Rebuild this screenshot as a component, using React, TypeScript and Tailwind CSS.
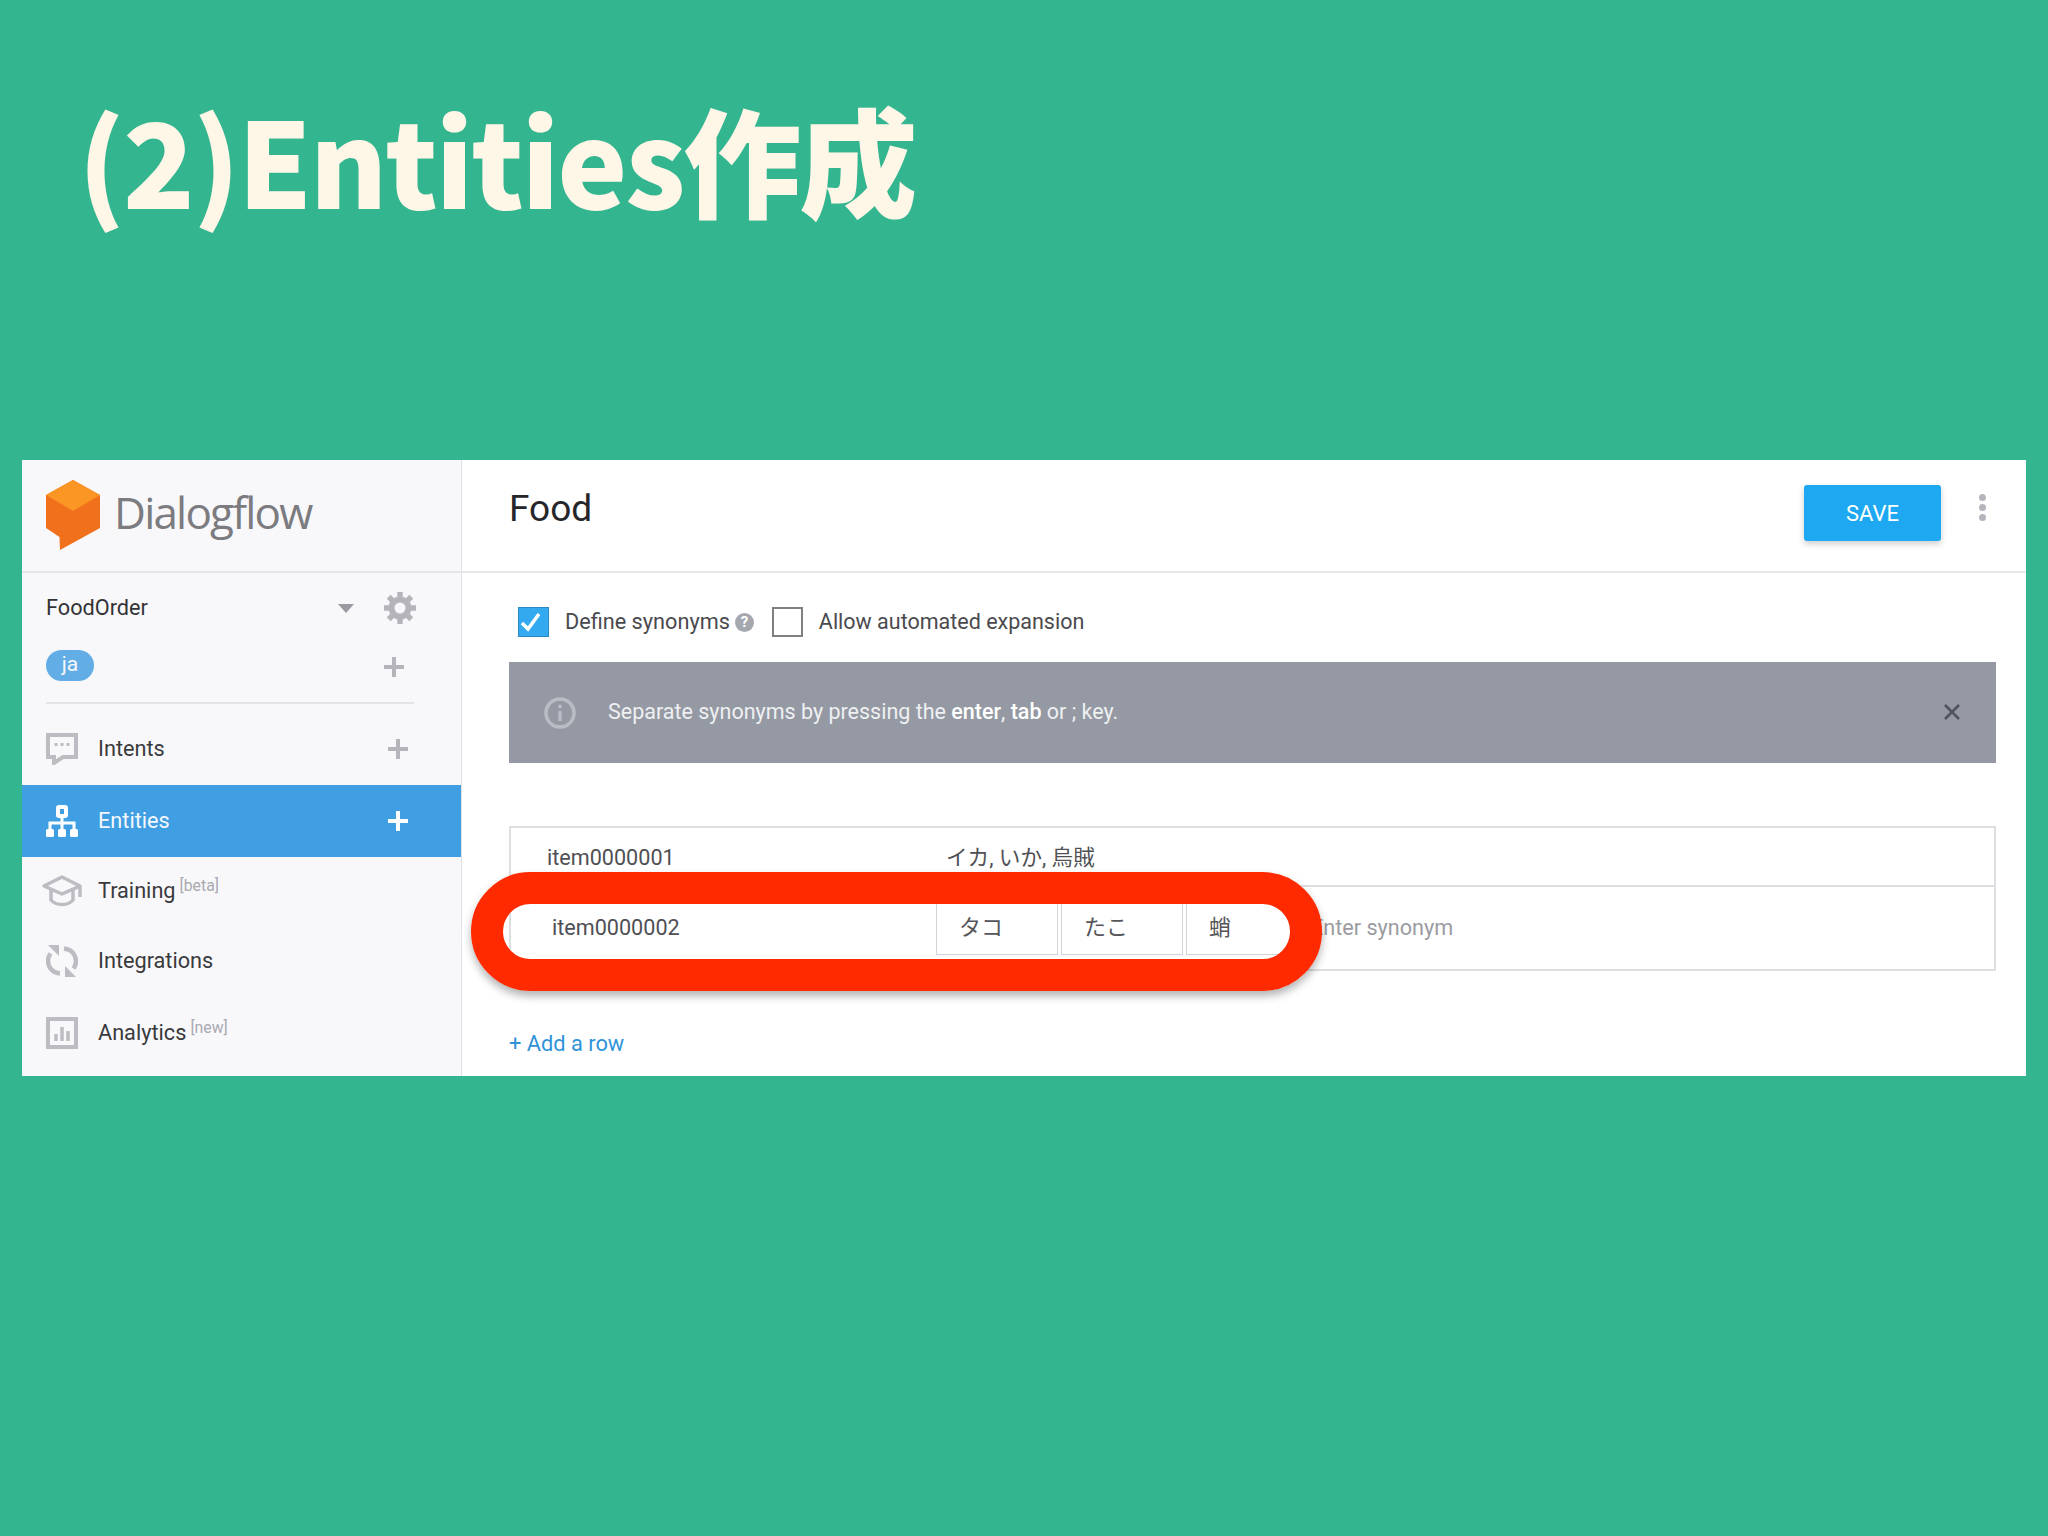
const roboto = { fontFamily: '"Roboto", "Noto Sans CJK JP", sans-serif' };

function Logo() {
  return (
    <svg width="54" height="70" viewBox="0 0 54 70" className="shrink-0">
      <path d="M27 0 L54 15 L54 48 L14 70 L13.5 57 L0 48 L0 15 Z" fill="#f0701c" />
      <path d="M27 0 L54 15 L27 31 L0 15 Z" fill="#fb9524" />
    </svg>
  );
}

function Plus({ color = "#b4b4ba", size = 22, stroke = 4 }: { color?: string; size?: number; stroke?: number }) {
  return (
    <svg width={size} height={size} viewBox="0 0 22 22" className="shrink-0">
      <path d="M11 1 V21 M1 11 H21" stroke={color} strokeWidth={stroke} fill="none" />
    </svg>
  );
}

function Gear() {
  return (
    <svg width="32" height="32" viewBox="0 0 32 32" className="shrink-0">
      <circle cx="16" cy="16" r="8.500" fill="none" stroke="#b4b4ba" strokeWidth="6" />
      <path
        d="M16 0 V6 M16 26 V32 M0 16 H6 M26 16 H32 M4.700 4.700 L9 9 M23 23 L27.300 27.300 M27.300 4.700 L23 9 M9 23 L4.700 27.300"
        stroke="#b4b4ba"
        strokeWidth="5.500"
      />
    </svg>
  );
}

function ChatIcon() {
  return (
    <svg width="32" height="32" viewBox="0 0 32 32" className="shrink-0">
      <path d="M2 2 H30 V24 H17 L8 30 V24 H2 Z" fill="none" stroke="#bcbcc2" strokeWidth="4" />
      <path d="M8.500 11.500 H11.500 M14.500 11.500 H17.500 M20.500 11.500 H23.500" stroke="#bcbcc2" strokeWidth="3" />
    </svg>
  );
}

function SitemapIcon() {
  return (
    <svg width="32" height="32" viewBox="0 0 32 32" className="shrink-0">
      <rect x="12" y="2" width="8" height="9" rx="1" fill="none" stroke="#fff" strokeWidth="4" />
      <path d="M16 12 V24 M4 24 V18 H28 V24" fill="none" stroke="#fff" strokeWidth="3" />
      <rect x="0" y="24" width="8" height="8" rx="1.500" fill="#fff" />
      <rect x="12" y="24" width="8" height="8" rx="1.500" fill="#fff" />
      <rect x="24" y="24" width="8" height="8" rx="1.500" fill="#fff" />
    </svg>
  );
}

function CapIcon() {
  return (
    <svg width="42" height="32" viewBox="0 0 42 32" className="shrink-0">
      <path d="M21 2 L39 11 L21 19 L3 11 Z" fill="none" stroke="#bcbcc2" strokeWidth="3.500" strokeLinejoin="round" />
      <path d="M10 15 V25 C15 31 27 31 32 25 V15" fill="none" stroke="#bcbcc2" strokeWidth="3.500" />
      <path d="M39 11 V22" fill="none" stroke="#bcbcc2" strokeWidth="3.500" />
    </svg>
  );
}

function SyncIcon() {
  return (
    <svg width="32" height="32" viewBox="0 0 32 32" className="shrink-0">
      <path d="M18 3.500 C25 4 30 9.500 30 16 C30 19 29 21.500 27.500 23.500" fill="none" stroke="#bcbcc2" strokeWidth="4.500" />
      <path d="M14 28.500 C7 28 2 22.500 2 16 C2 13 3 10.500 4.500 8.500" fill="none" stroke="#bcbcc2" strokeWidth="4.500" />
      <path d="M2 0 L13 0 L13 11 Z" fill="#bcbcc2" />
      <path d="M30 32 L19 32 L19 21 Z" fill="#bcbcc2" />
    </svg>
  );
}

function ChartIcon() {
  return (
    <svg width="32" height="32" viewBox="0 0 32 32" className="shrink-0">
      <rect x="2" y="2" width="28" height="28" fill="none" stroke="#bcbcc2" strokeWidth="4" />
      <path d="M10 24 V17 M16 24 V10 M22 24 V14" stroke="#bcbcc2" strokeWidth="3.500" />
    </svg>
  );
}

function InfoIcon() {
  return (
    <svg width="32" height="32" viewBox="0 0 32 32" className="shrink-0">
      <circle cx="16" cy="16" r="14" fill="none" stroke="#b9bcc4" strokeWidth="3.500" />
      <circle cx="16" cy="9.500" r="2" fill="#b9bcc4" />
      <path d="M16 14 V24" stroke="#b9bcc4" strokeWidth="3.500" />
    </svg>
  );
}

function NavRow({
  icon,
  label,
  tag,
  plus,
  active,
  h,
}: {
  icon: React.ReactNode;
  label: string;
  tag?: string;
  plus?: boolean;
  active?: boolean;
  h: string;
}) {
  return (
    <div className={`flex items-center pl-6 pr-[52px] ${h} ${active ? "bg-[#409ee2] text-[#f4f8fc]" : "text-[#3a3a3d]"}`}>
      <div className="w-[32px] flex justify-center">{icon}</div>
      <span className="ml-5 text-[21.700px] leading-none">{label}</span>
      {tag && <span className="ml-1 -mt-[10px] text-[15.800px] leading-none text-[#a9a9b1]">{tag}</span>}
      {plus && (
        <div className="ml-auto">
          <Plus color={active ? "#ffffff" : "#b4b4ba"} />
        </div>
      )}
    </div>
  );
}

function Chip({ text, w }: { text: string; w: string }) {
  return (
    <div className={`h-[55px] ${w} border border-[#d4d4d8] flex items-center pl-[22px] text-[22px] text-[#55555a]`}>{text}</div>
  );
}

export default function App() {
  return (
    <div className="relative w-[2048px] h-[1536px] bg-[#33b590] overflow-hidden" style={roboto}>
      <div className="h-[460px] pl-[78px] pt-[93px]">
        <h1
          className="text-[118px] leading-[130px] font-black text-[#fef6e6] tracking-[-2.200px]"
          style={{ fontFamily: '"Noto Sans CJK JP", sans-serif' }}
        >
          (2)Entities作成
        </h1>
      </div>

      <div className="relative mx-[22px] h-[616px] flex bg-white">
        {/* sidebar */}
        <aside className="w-[440px] shrink-0 bg-[#f8f8fa] border-r border-[#e2e2e6] flex flex-col">
          <div className="h-[113px] shrink-0 border-b-2 border-[#e6e6ea] flex items-center pl-6 pb-[1px]">
            <Logo />
            <span
              className="ml-[14px] -mt-[6px] text-[44px] leading-none font-medium text-[#7b7b80] tracking-[-1.800px]"
              style={{ fontFamily: '"Open Sans", sans-serif' }}
            >
              Dialogflow
            </span>
          </div>
          <div className="h-[62px] shrink-0 flex items-center pl-6 pr-[45px] pt-2">
            <span className="text-[21.700px] text-[#333336]">FoodOrder</span>
            <div className="ml-auto mr-[30px] w-0 h-0 border-l-[8px] border-r-[8px] border-t-[9px] border-l-transparent border-r-transparent border-t-[#9a9aa2]" />
            <Gear />
          </div>
          <div className="h-[67px] shrink-0 flex items-center pl-6 pr-[56px] pb-[6px]">
            <span className="h-[31px] w-[48px] rounded-full bg-[#62ade6] text-[#f8f8fa] text-[21px] leading-[29px] text-center">ja</span>
            <div className="ml-auto mt-[3px]">
              <Plus />
            </div>
          </div>
          <div className="ml-6 w-[368px] h-[2px] shrink-0 bg-[#e4e4e8]" />
          <NavRow h="h-[81px] pt-2" icon={<ChatIcon />} label="Intents" plus />
          <NavRow h="h-[72px]" icon={<SitemapIcon />} label="Entities" plus active />
          <NavRow h="h-[68px]" icon={<CapIcon />} label="Training" tag="[beta]" />
          <NavRow h="h-[72px]" icon={<SyncIcon />} label="Integrations" />
          <NavRow h="h-[72px]" icon={<ChartIcon />} label="Analytics" tag="[new]" />
        </aside>

        {/* main */}
        <main className="flex-1 min-w-0 flex flex-col">
          <div className="h-[113px] shrink-0 border-b-2 border-[#e8e8ea] flex items-start pl-[47px] pr-[40px]">
            <h2 className="mt-[25px] text-[37px] leading-[48px] text-[#26262a]">Food</h2>
            <button className="ml-auto mt-[25px] w-[137px] h-[56px] rounded-[3px] bg-[#1da8f1] text-white text-[22px] shadow-[0_3px_6px_rgba(0,0,0,0.2)]">
              SAVE
            </button>
            <div className="ml-[38px] mt-[34px] flex flex-col gap-[3px]">
              <div className="w-[7px] h-[7px] rounded-full bg-[#b5b5bd]" />
              <div className="w-[7px] h-[7px] rounded-full bg-[#b5b5bd]" />
              <div className="w-[7px] h-[7px] rounded-full bg-[#b5b5bd]" />
            </div>
          </div>

          <div className="pl-[47px] pr-[30px] flex-1 flex flex-col">
            <div className="mt-[34px] h-[30px] pl-[9px] flex items-center text-[21.700px] text-[#4a4a4e]">
              <div className="w-[31px] h-[30px] bg-[#33aaf0] border border-[#2b8ac4] flex items-center pl-[1px]">
                <svg width="22" height="20" viewBox="0 0 22 20">
                  <path d="M2 11 L8 17 L19 2" fill="none" stroke="#fff" strokeWidth="3.500" />
                </svg>
              </div>
              <span className="ml-[16px]">Define synonyms</span>
              <span className="ml-[5px] w-[19px] h-[19px] rounded-full bg-[#a6a8b0] text-white text-[15px] leading-[19px] font-bold text-center">?</span>
              <div className="ml-[18px] w-[31px] h-[30px] bg-white border-2 border-[#808084]" />
              <span className="ml-[16px] text-[21.500px]">Allow automated expansion</span>
            </div>

            <div className="mt-[25px] h-[101px] bg-[#9599a3] flex items-center pl-[35px] pr-[36px] text-[21.500px] text-[#eef0f2]">
              <InfoIcon />
              <p className="ml-[32px]">
                Separate synonyms by pressing the <span className="font-medium text-white">enter</span>,{" "}
                <span className="font-medium text-white">tab</span> or ; key.
              </p>
              <svg width="16" height="16" viewBox="0 0 16 16" className="ml-auto -mt-[2px]">
                <path d="M1 1 L15 15 M15 1 L1 15" stroke="#50535c" strokeWidth="2.500" />
              </svg>
            </div>

            <div className="mt-[63px] h-[145px] border-2 border-[#dfdfe3] flex flex-col text-[21.600px] text-[#4f4f54]">
              <div className="h-[59px] shrink-0 border-b-2 border-[#dfdfe3] flex items-center pl-[36px] pt-1">
                <span className="w-[399px]">item0000001</span>
                <span>イカ, いか, 烏賊</span>
              </div>
              <div className="flex-1 flex items-start pt-[13px]">
                <span className="pl-[41px] w-[425px] h-[55px] leading-[55px]">item0000002</span>
                <div className="flex gap-[3px]">
                  <Chip text="タコ" w="w-[122px]" />
                  <Chip text="たこ" w="w-[122px]" />
                  <Chip text="蛸" w="w-[118px]" />
                </div>
                <span className="ml-[7px] h-[55px] leading-[55px] text-[#9b9ba1]">Enter synonym</span>
              </div>
            </div>

            <a className="mt-[60px] text-[21.800px] leading-[26px] text-[#2f93d8]">+ Add a row</a>
          </div>
        </main>

        {/* hand-drawn highlight over the second row */}
        <div className="absolute left-[449px] top-[412px] w-[851px] h-[119px] rounded-full border-[32px] border-[#ff2a00] shadow-[0_5px_8px_rgba(0,0,0,0.3)]" />
      </div>
    </div>
  );
}
